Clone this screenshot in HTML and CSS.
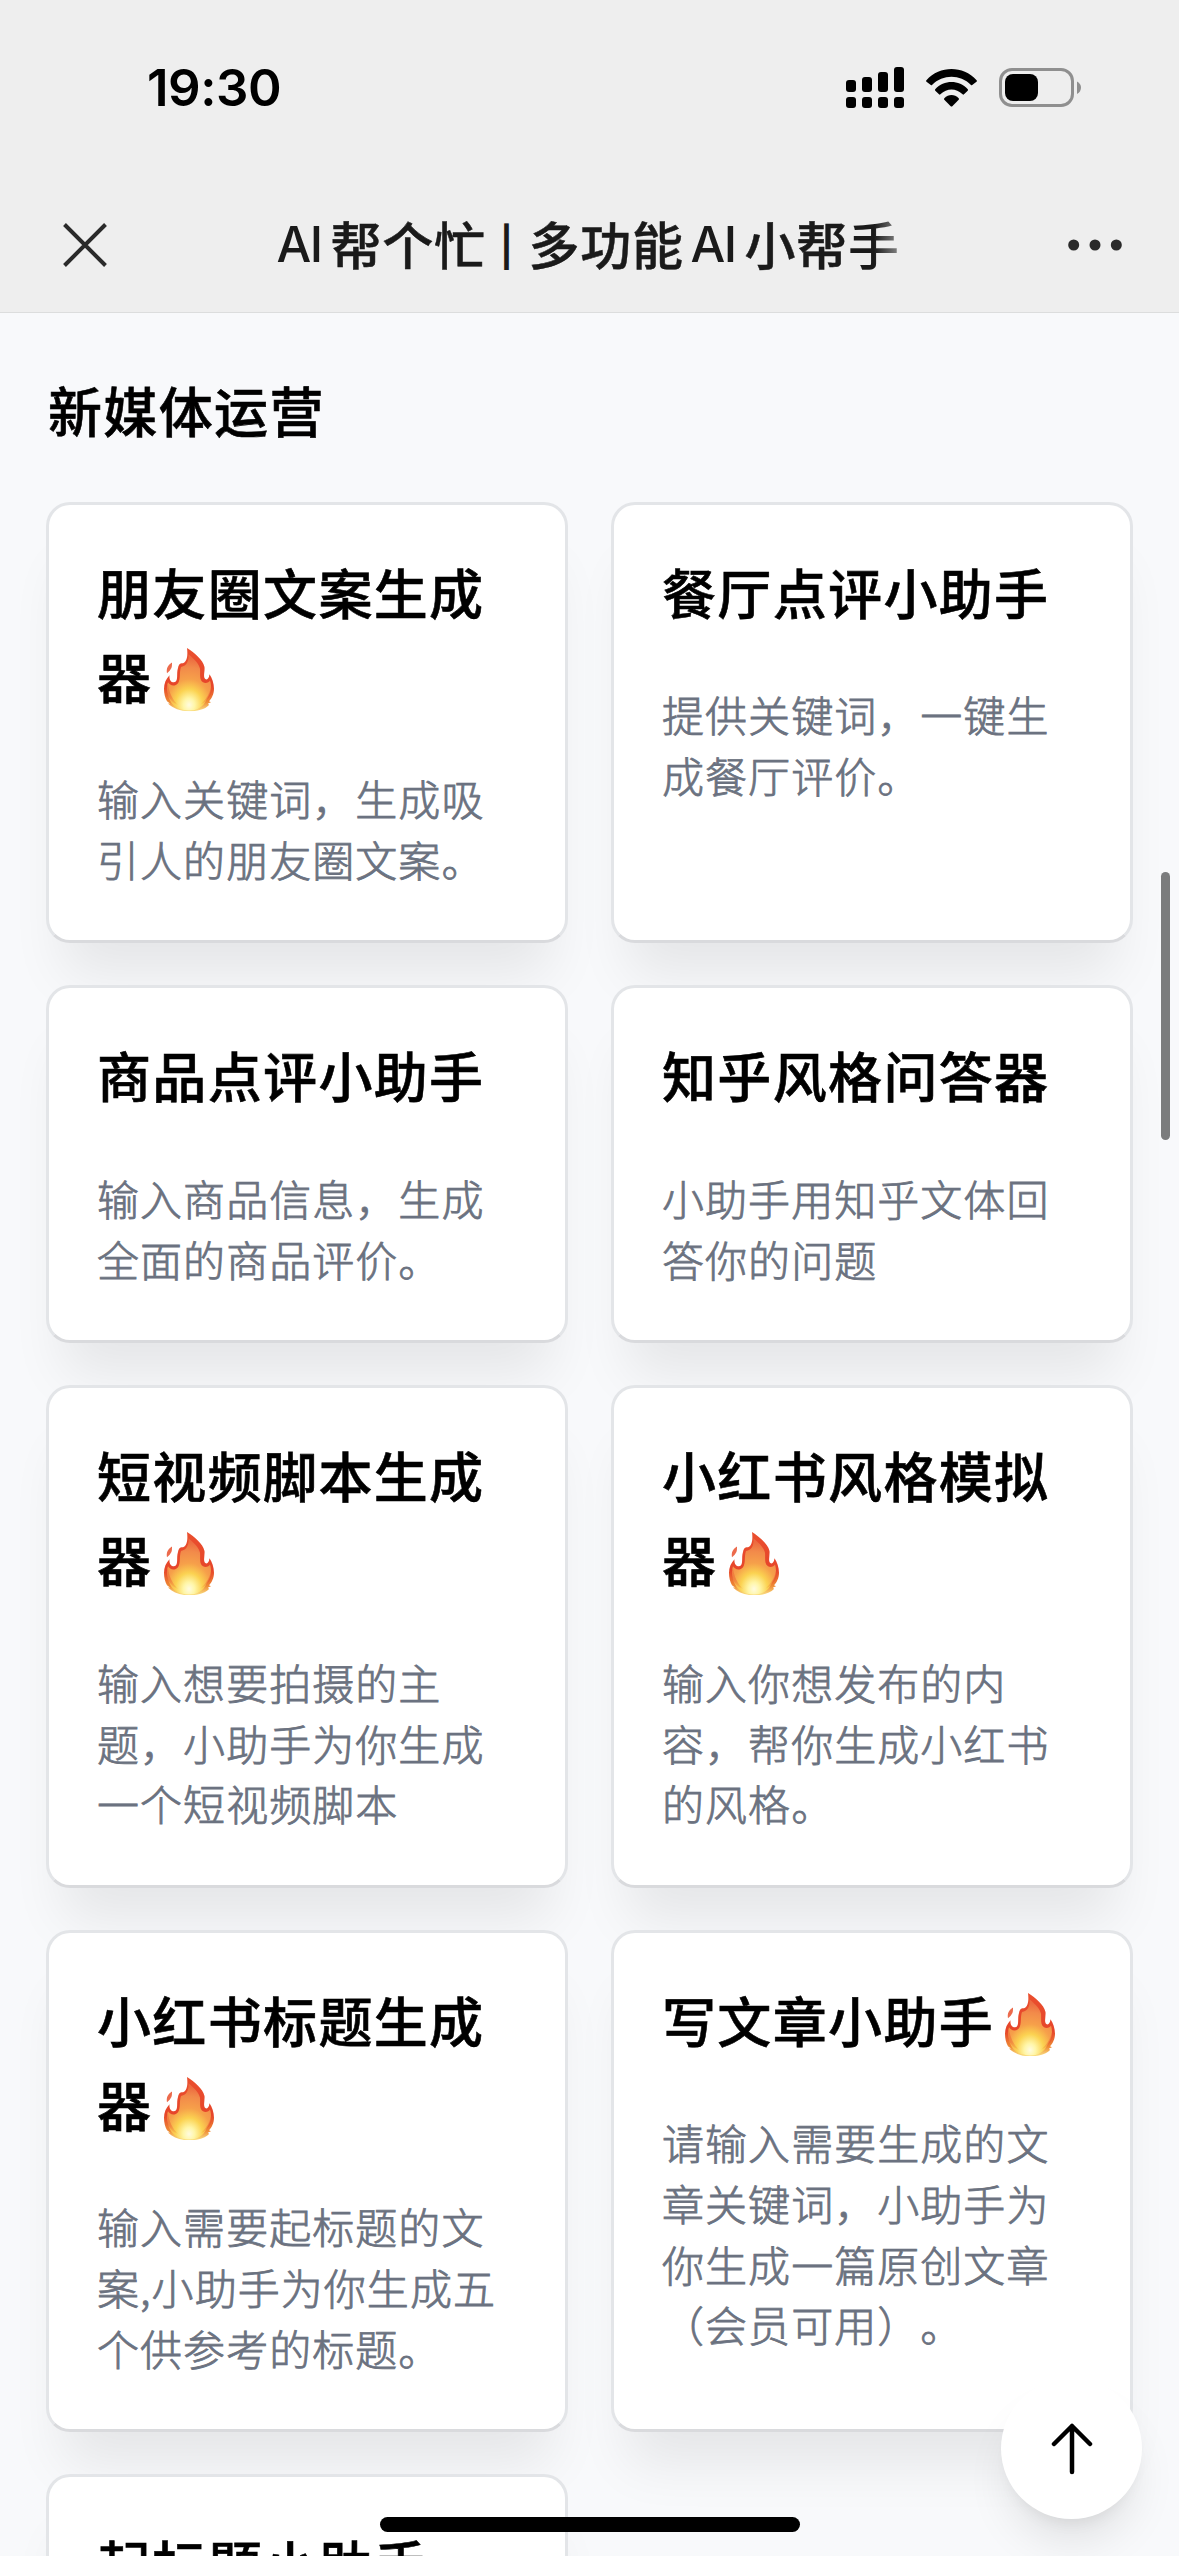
FILE: index.html
```html
<!DOCTYPE html>
<html lang="zh-CN">
<head>
<meta charset="utf-8">
<title>AI帮个忙 | 多功能AI小帮手</title>
<link rel="stylesheet" href="styles.css">
</head>
<body>
<svg class="defs" width="0" height="0">
  <defs>
    <radialGradient id="flame" gradientUnits="userSpaceOnUse" cx="25" cy="63" r="52" gradientTransform="translate(25 63) scale(.78 1) translate(-25 -63)">
      <stop offset="0" stop-color="#fffbe0"/>
      <stop offset=".14" stop-color="#fff6a8"/>
      <stop offset=".34" stop-color="#fbd251"/>
      <stop offset=".55" stop-color="#f6a04a"/>
      <stop offset=".8" stop-color="#f28a4a"/>
      <stop offset="1" stop-color="#ec6a40"/>
    </radialGradient>
    <linearGradient id="rim" x1="0" y1="0" x2="0" y2="1">
      <stop offset="0" stop-color="#ea4f2e"/>
      <stop offset=".6" stop-color="#e6452a"/>
      <stop offset=".85" stop-color="#ee8a35"/>
      <stop offset="1" stop-color="#fbe487"/>
    </linearGradient>
    <symbol id="fire" viewBox="0 0 50 70" preserveAspectRatio="none">
      <path fill="url(#rim)" d="M23 0C30 5 39 13 40.500 21C41 26 39 31 41 34C43 36 45 34 45.500 29C48 33 50 39 50 45C50 51 47.500 56 45 59L47 60L44 61.500L45 63C41 68 33 70 25 70C16 70 9 67 4 61.500L6 61.500L3 59C1 55 0 50 0 45C0 39 2 34 5.500 30C5 35 7 38 10 38C15 37 12 28 14 22C15 17 17 17 19 17C23 15 24 9 23 0Z"/>
      <path fill="url(#flame)" d="M24.500 7C31 13 35 18 36 23C36.500 29 35 35 39 38C42 40 45 38 46 36C48 43 47 50 43 56C39 66 33 69 25 69C15 69 9 65 6 58C3 51 2 44 4 38C6 42 11 43 14 39C17 34 15 27 17 21C23 20 25 14 24.500 7Z"/>
      <path fill="url(#rim)" opacity=".35" d="M4 40C5 48 8 57 15 64C8 61 2 53 2 44ZM47 40C47 49 42 57 36 63C44 59 49 51 48 44Z"/>
      <path fill="#ec6a4c" d="M8 16C8 21 8 23 3 28C2 22 4 19 8 16Z"/>
    </symbol>
  </defs>
</svg>

<header class="topbar">
  <div class="status">
    <span class="time">19:30</span>
    <div class="indicators">
      <svg class="signal" viewBox="0 0 58 42">
        <rect x="0" y="13" width="10" height="12" rx="3"/><rect x="16" y="10" width="10" height="15" rx="3"/><rect x="32" y="5" width="10" height="20" rx="3"/><rect x="48" y="0" width="10" height="25" rx="3"/>
        <rect x="0" y="30" width="10" height="11" rx="3"/><rect x="16" y="30" width="10" height="11" rx="3"/><rect x="32" y="30" width="10" height="11" rx="3"/><rect x="48" y="30" width="10" height="11" rx="3"/>
      </svg>
      <svg class="wifi" viewBox="0 0 51 38">
        <path d="M.4 11.200C14-3.700 37-3.700 50.600 11.200Q51.200 12 50.500 12.700L46.200 16Q45.600 16.500 45 15.900C34 5 17 5 6 15.900Q5.400 16.500 4.800 16L.5 12.700Q-.2 12 .4 11.200Z"/>
        <path d="M9.200 20.200C18 10.700 33 10.700 41.800 20.200Q42.400 21 41.700 21.700L38 25.300Q37.300 26 36.600 25.300C30 19 21 19 14.400 25.300Q13.700 26 13 25.300L9.300 21.700Q8.600 21 9.200 20.200Z"/>
        <path d="M18.300 29.300C22.500 25 28.500 25 32.700 29.300Q33.300 30 32.700 30.700L26.300 37.200Q25.500 38 24.700 37.200L18.300 30.700Q17.700 30 18.300 29.300Z"/>
      </svg>
      <svg class="battery" viewBox="0 0 82 40">
        <rect x="1.500" y="1.500" width="72" height="36" rx="11.500" fill="none" stroke="#8f8f8f" stroke-width="3"/>
        <rect x="6" y="6" width="33" height="27" rx="8"/>
        <path fill="#8f8f8f" d="M78 13.500C80.800 15 82 17 82 19.500S80.800 24.500 78 26Z"/>
      </svg>
    </div>
  </div>
  <nav class="nav">
    <svg class="close" viewBox="0 0 44 44"><path d="M1.500 1.500L42.500 42.500M42.500 1.500L1.500 42.500" fill="none" stroke="#2a2a2a" stroke-width="4"/></svg>
    <h1 class="page-title"><span class="latin">AI</span><span class="han">帮个忙</span><span class="bar">|</span><span class="han">多功能</span><span class="latin second">AI</span><span class="han">小帮<span class="fade">手</span></span></h1>
    <svg class="more" viewBox="0 0 54 12" fill="#2a2a2a"><circle cx="5.700" cy="6" r="5.500"/><circle cx="27" cy="6" r="5.500"/><circle cx="48.300" cy="6" r="5.500"/></svg>
  </nav>
</header>

<main class="content">
  <h2 class="section-title">新媒体运营</h2>
  <div class="cards">
    <article class="card"><h3>朋友圈文案生成<br>器<svg class="fire"><use href="#fire"/></svg></h3><p>输入关键词，生成吸<br>引人的朋友圈文案。</p></article>
    <article class="card"><h3>餐厅点评小助手</h3><p>提供关键词，一键生<br>成餐厅评价。</p></article>
    <article class="card"><h3>商品点评小助手</h3><p>输入商品信息，生成<br>全面的商品评价。</p></article>
    <article class="card"><h3>知乎风格问答器</h3><p>小助手用知乎文体回<br>答你的问题</p></article>
    <article class="card"><h3>短视频脚本生成<br>器<svg class="fire"><use href="#fire"/></svg></h3><p>输入想要拍摄的主<br>题，小助手为你生成<br>一个短视频脚本</p></article>
    <article class="card"><h3>小红书风格模拟<br>器<svg class="fire"><use href="#fire"/></svg></h3><p>输入你想发布的内<br>容，帮你生成小红书<br>的风格。</p></article>
    <article class="card"><h3>小红书标题生成<br>器<svg class="fire"><use href="#fire"/></svg></h3><p>输入需要起标题的文<br>案,小助手为你生成五<br>个供参考的标题。</p></article>
    <article class="card"><h3>写文章小助手<svg class="fire"><use href="#fire"/></svg></h3><p>请输入需要生成的文<br>章关键词，小助手为<br>你生成一篇原创文章<br>（会员可用）。</p></article>
    <article class="card"><h3>起标题小助手</h3></article>
  </div>
</main>

<div class="scrollbar"></div>
<button class="to-top" aria-label="回到顶部">
  <svg viewBox="0 0 42 52"><path d="M21 49V3M3 21L21 3L39 21" fill="none" stroke="#000" stroke-width="4.500" stroke-linecap="round" stroke-linejoin="round"/></svg>
</button>
<div class="home-indicator"></div>
</body>
</html>
```

FILE: styles.css
```css
* { box-sizing: border-box; margin: 0; padding: 0; }

html, body { width: 1179px; height: 2556px; overflow: hidden; }

body {
  position: relative;
  background: #f8f9fb;
  color: #000;
  font-family: "Noto Sans CJK SC", sans-serif;
}

.defs { position: absolute; }

.topbar {
  height: 313px;
  background: #eee;
  border-bottom: 1px solid #dcdddd;
}

.status {
  height: 176px;
  padding: 0 98px 0 147px;
  display: flex;
  justify-content: space-between;
  align-items: center;
}

.time {
  font: 600 51px/60px Inter, sans-serif;
  letter-spacing: -0.5px;
}

.indicators { display: flex; align-items: flex-start; }
.signal { width: 58px; height: 42px; }
.wifi { width: 51px; height: 38px; margin: 2px 0 0 22px; }
.battery { width: 82px; height: 40px; margin: 1px 0 0 22px; }

.nav {
  height: 137px;
  padding: 0 57px 0 63px;
  display: flex;
  align-items: center;
  justify-content: space-between;
}

.close { width: 44px; height: 44px; }
.more { width: 54px; height: 12px; }

.page-title {
  display: flex;
  align-items: center;
  padding-bottom: 4px;
  font-size: 51px;
  line-height: 72px;
  font-weight: 500;
  color: #1a1a1a;
  white-space: nowrap;
}

.han {
  width: 154px;
  letter-spacing: .7px;
  -webkit-text-stroke: .5px #1a1a1a;
}

.latin {
  width: 54px;
  padding-top: 4px;
  font-family: Inter, sans-serif;
  font-size: 49px;
  letter-spacing: -1.5px;
}

.latin.second { margin-left: 8px; }

.bar {
  width: 44px;
  padding-top: 8px;
  font-family: Inter, sans-serif;
  font-size: 39px;
  font-weight: 600;
  text-align: center;
}

.fade {
  background: linear-gradient(90deg, #1a1a1a 50%, #8a8a8a 100%);
  -webkit-background-clip: text;
  background-clip: text;
  color: transparent;
  -webkit-text-stroke: 0;
}

.content { padding: 0 46px; }

.section-title {
  padding: 55px 0 0 2px;
  height: 188.600px;
  font-size: 54px;
  line-height: 84px;
  font-weight: 500;
  letter-spacing: 1.35px;
  -webkit-text-stroke: .6px #000;
}

.cards {
  display: grid;
  grid-template-columns: 522px 522px;
  gap: 42.300px 43px;
}

.card {
  padding: 45px 48px 50.800px;
  background: #fff;
  border: 3px solid #e3e5e8;
  border-bottom-color: #d9dadd;
  border-radius: 24px;
  box-shadow: 0 49px 54px -18px rgba(0, 0, 0, .08);
  white-space: nowrap;
}

.card h3 {
  font-size: 54px;
  line-height: 84px;
  font-weight: 500;
  letter-spacing: 1.35px;
  -webkit-text-stroke: .6px #000;
}

.card p {
  margin-top: 50.600px;
  font-size: 42px;
  line-height: 60.600px;
  font-weight: 300;
  letter-spacing: 1.05px;
  color: #6b7280;
  text-spacing-trim: space-all;
  font-feature-settings: "chws" 0, "halt" 0;
  -webkit-text-stroke: .8px #6b7280;
}

.fire {
  width: 50px;
  height: 63.300px;
  margin-left: 11.200px;
  vertical-align: -13px;
}

.scrollbar {
  position: absolute;
  left: 1161px;
  top: 872px;
  width: 9px;
  height: 268px;
  border-radius: 5px;
  background: #7b7c7d;
}

.to-top {
  position: absolute;
  left: 1001px;
  top: 2378px;
  width: 141px;
  height: 141px;
  border: 0;
  border-radius: 50%;
  background: #fff;
  display: flex;
  align-items: center;
  justify-content: center;
  box-shadow: 0 30px 45px -9px rgba(0, 0, 0, .1), 0 12px 18px -12px rgba(0, 0, 0, .1);
}

.to-top svg { width: 42px; height: 52px; }

.home-indicator {
  position: absolute;
  left: 380px;
  top: 2517px;
  width: 420px;
  height: 15px;
  border-radius: 8px;
  background: #000;
}
```
